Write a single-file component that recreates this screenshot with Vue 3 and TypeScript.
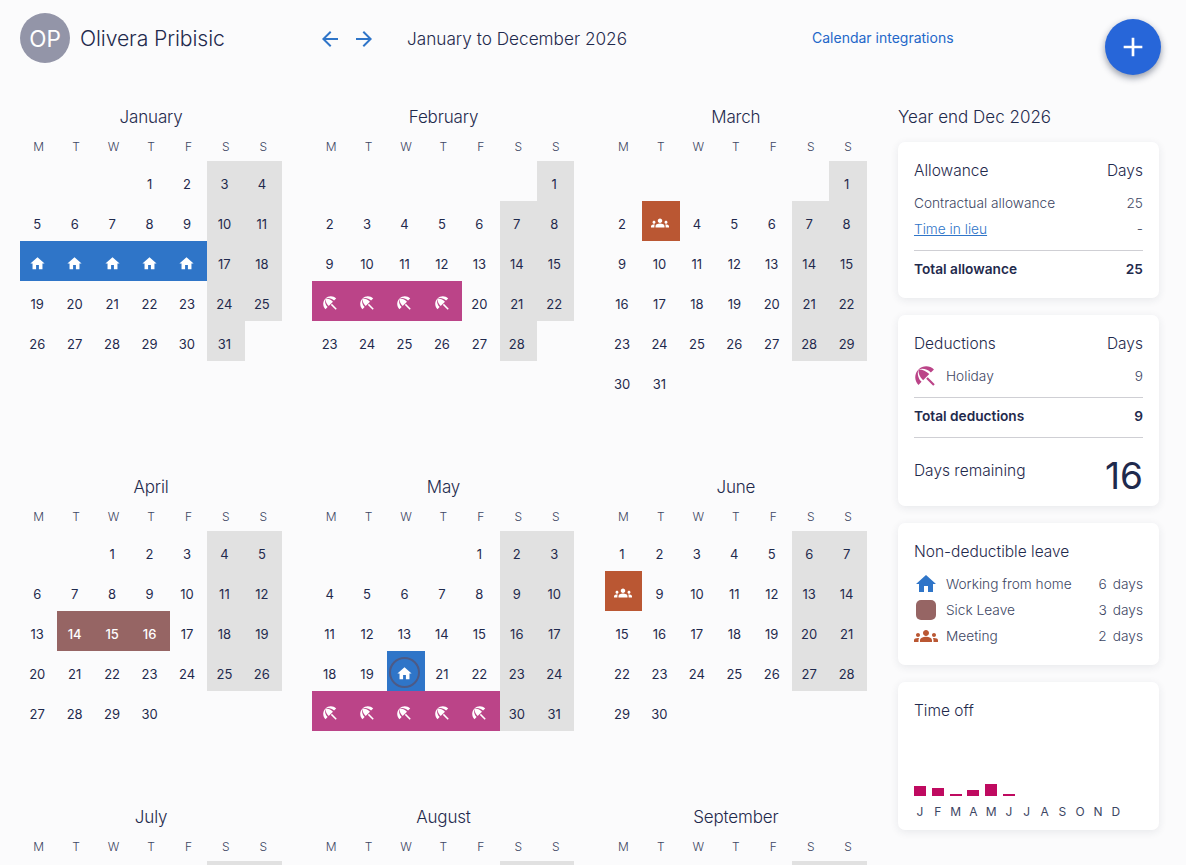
<script setup lang="ts">
type Kind = 'home' | 'holiday' | 'sick' | 'meeting'
interface Cell { day: number; weekend: boolean; kind?: Kind; today: boolean }

const ICONS: Record<string, string> = {
  home: 'M10 20v-6h4v6h5v-8h3L12 3 2 12h3v8z',
  holiday: 'M13.127 14.56l1.43-1.43 6.44 6.443L19.57 21zm4.293-5.73l2.86-2.86c-3.95-3.95-10.35-3.96-14.3-.02 3.93-1.3 8.31-.25 11.44 2.88zM5.95 5.98c-3.94 3.95-3.93 10.35.02 14.3l2.86-2.86C5.7 14.29 4.65 9.91 5.95 5.98zm.02-.02l-.01.01c-.38 3.01 1.17 6.88 4.3 10.02l5.73-5.73c-3.13-3.13-7.01-4.68-10.02-4.3z',
  meeting: 'M12 12.75c1.63 0 3.07.39 4.24.9 1.08.48 1.76 1.56 1.76 2.73V18H6v-1.61c0-1.18.68-2.26 1.76-2.73 1.17-.52 2.61-.91 4.24-.91zM4 13c1.1 0 2-.9 2-2s-.9-2-2-2-2 .9-2 2 .9 2 2 2zm1.13 1.1c-.37-.06-.74-.1-1.13-.1-.99 0-1.93.21-2.78.58C.48 14.9 0 15.62 0 16.43V18h4.5v-1.61c0-.83.23-1.61.63-2.29zM20 13c1.1 0 2-.9 2-2s-.9-2-2-2-2 .9-2 2 .9 2 2 2zm4 3.43c0-.81-.48-1.53-1.22-1.85-.85-.37-1.79-.58-2.78-.58-.39 0-.76.04-1.13.1.4.68.63 1.46.63 2.29V18H24v-1.57zM12 6c1.66 0 3 1.34 3 3s-1.34 3-3 3-3-1.34-3-3 1.34-3 3-3z',
  back: 'M20 11H7.83l5.59-5.59L12 4l-8 8 8 8 1.41-1.41L7.83 13H20v-2z',
  forward: 'M12 4l-1.41 1.41L16.17 11H4v2h12.17l-5.58 5.59L12 20l8-8z',
  plus: 'M19 13h-6v6h-2v-6H5v-2h6V5h2v6h6v2z',
}

const MONTH_NAMES = ['January', 'February', 'March', 'April', 'May', 'June', 'July', 'August', 'September', 'October', 'November', 'December']
const WEEKDAYS = ['M', 'T', 'W', 'T', 'F', 'S', 'S']

const EVENTS: Record<string, Kind> = {
  '0-12': 'home', '0-13': 'home', '0-14': 'home', '0-15': 'home', '0-16': 'home',
  '1-16': 'holiday', '1-17': 'holiday', '1-18': 'holiday', '1-19': 'holiday',
  '2-3': 'meeting',
  '3-14': 'sick', '3-15': 'sick', '3-16': 'sick',
  '4-20': 'home',
  '4-25': 'holiday', '4-26': 'holiday', '4-27': 'holiday', '4-28': 'holiday', '4-29': 'holiday',
  '5-8': 'meeting',
}

const months = MONTH_NAMES.map((name, m) => {
  const offset = (new Date(2026, m, 1).getDay() + 6) % 7
  const count = new Date(2026, m + 1, 0).getDate()
  const cells: Cell[] = []
  for (let day = 1; day <= count; day++) {
    const col = (offset + day - 1) % 7
    cells.push({ day, weekend: col >= 5, kind: EVENTS[`${m}-${day}`], today: m === 4 && day === 20 })
  }
  return { name, offset, cells }
})

const chart = [5, 4, 1, 3, 6, 1, 0, 0, 0, 0, 0, 0].map((days, i) => ({
  days,
  label: 'JFMAMJJASOND'[i],
}))
</script>

<template>
  <div class="page">
    <header class="top">
      <div class="person">
        <div class="avatar">OP</div>
        <div class="name">Olivera Pribisic</div>
      </div>
      <div class="arrows">
        <svg class="arrow" viewBox="0 0 24 24"><path :d="ICONS.back" /></svg>
        <svg class="arrow" viewBox="0 0 24 24"><path :d="ICONS.forward" /></svg>
      </div>
      <div class="range">January to December 2026</div>
      <a class="integrations">Calendar integrations</a>
    </header>

    <button class="fab" aria-label="Add">
      <svg viewBox="0 0 24 24"><path :d="ICONS.plus" /></svg>
    </button>

    <main class="body">
      <section class="year">
        <div v-for="month in months" :key="month.name" class="month">
          <h2 class="month-name">{{ month.name }}</h2>
          <div class="weekdays">
            <span v-for="(d, i) in WEEKDAYS" :key="i">{{ d }}</span>
          </div>
          <div class="days">
            <span v-for="n in month.offset" :key="'e' + n" class="blank"></span>
            <div
              v-for="cell in month.cells"
              :key="cell.day"
              class="cell"
              :class="[cell.kind, { weekend: cell.weekend }]"
            >
              <span v-if="cell.today" class="today"></span>
              <svg v-if="cell.kind === 'home'" class="ic-home" viewBox="0 0 24 24"><path :d="ICONS.home" /></svg>
              <svg v-else-if="cell.kind === 'holiday'" class="ic-holiday" viewBox="0 0 24 24"><path :d="ICONS.holiday" /></svg>
              <svg v-else-if="cell.kind === 'meeting'" class="ic-meeting" viewBox="0 0 24 24"><path :d="ICONS.meeting" /></svg>
              <span v-else>{{ cell.day }}</span>
            </div>
          </div>
        </div>
      </section>

      <aside class="side">
        <h2 class="side-title">Year end Dec 2026</h2>

        <div class="card">
          <div class="row head"><span>Allowance</span><span>Days</span></div>
          <div class="row line"><span>Contractual allowance</span><span>25</span></div>
          <div class="row line"><a class="lieu">Time in lieu</a><span>-</span></div>
          <div class="row total"><span>Total allowance</span><span>25</span></div>
        </div>

        <div class="card">
          <div class="row head"><span>Deductions</span><span>Days</span></div>
          <div class="row line">
            <span class="labelled">
              <span class="slot"><svg class="side-holiday" viewBox="0 0 24 24"><path :d="ICONS.holiday" /></svg></span>
              Holiday
            </span>
            <span>9</span>
          </div>
          <div class="row total"><span>Total deductions</span><span>9</span></div>
          <div class="row remaining"><span>Days remaining</span><span class="big">16</span></div>
        </div>

        <div class="card leave">
          <div class="row head"><span>Non-deductible leave</span></div>
          <div class="row line">
            <span class="labelled">
              <span class="slot"><svg class="side-home" viewBox="0 0 24 24"><path :d="ICONS.home" /></svg></span>
              Working from home
            </span>
            <span class="count"><span>6</span><span>days</span></span>
          </div>
          <div class="row line">
            <span class="labelled">
              <span class="slot"><span class="sick-swatch"></span></span>
              Sick Leave
            </span>
            <span class="count"><span>3</span><span>days</span></span>
          </div>
          <div class="row line">
            <span class="labelled">
              <span class="slot"><svg class="side-meeting" viewBox="0 0 24 24"><path :d="ICONS.meeting" /></svg></span>
              Meeting
            </span>
            <span class="count"><span>2</span><span>days</span></span>
          </div>
        </div>

        <div class="card off">
          <div class="row head"><span>Time off</span></div>
          <div class="bars">
            <div v-for="(c, i) in chart" :key="i" class="bar-col">
              <div class="bar" :style="{ height: c.days * 2 + 'px' }"></div>
            </div>
          </div>
          <div class="bar-labels">
            <span v-for="(c, i) in chart" :key="i">{{ c.label }}</span>
          </div>
        </div>
      </aside>
    </main>
  </div>
</template>

<style>
html, body {
  margin: 0;
  height: 100%;
  overflow: hidden;
  background: #fbfbfc;
}
</style>

<style scoped>
.page {
  position: relative;
  height: 865px;
  overflow: hidden;
  background: #fbfbfc;
  color: #1f2a4d;
  font-family: Inter, "Liberation Sans", sans-serif;
  font-weight: 300;
}
h2 { margin: 0; font-weight: 300; }

.top {
  display: flex;
  align-items: center;
  height: 50px;
  padding: 13px 0 41px 20px;
}
.person {
  display: flex;
  align-items: center;
  gap: 10px;
  width: 298px;
}
.avatar {
  width: 50px;
  height: 50px;
  border-radius: 50%;
  background: #9395a8;
  color: #fff;
  font-size: 22.5px;
  font-weight: 400;
  display: flex;
  align-items: center;
  justify-content: center;
}
.name {
  font-size: 21.2px;
  letter-spacing: -0.1px;
}
.arrows {
  display: flex;
  gap: 10px;
  width: 89px;
  padding-top: 2px;
}
.arrow {
  width: 24px;
  height: 24px;
  fill: #2f75c8;
}
.range {
  width: 405px;
  font-size: 17.2px;
}
.integrations {
  color: #2367c9;
  font-size: 14px;
  font-weight: 400;
  padding-bottom: 2px;
}

.fab {
  position: absolute;
  left: 1105px;
  top: 19px;
  width: 56px;
  height: 56px;
  padding: 0;
  border: 0;
  border-radius: 50%;
  background: #2766d9;
  box-shadow: 0 3px 7px rgba(20, 30, 60, 0.45);
  display: flex;
  align-items: center;
  justify-content: center;
}
.fab svg { width: 32px; height: 32px; fill: #fff; }

.body {
  display: flex;
  align-items: flex-start;
  padding-left: 20px;
  gap: 31.05px;
}
.year {
  display: grid;
  grid-template-columns: repeat(3, 262.15px);
  column-gap: 30.25px;
  row-gap: 73px;
}
.month-name {
  font-size: 17px;
  letter-spacing: -0.15px;
  line-height: 24px;
  text-align: center;
  padding-top: 1px;
  margin-bottom: 2px;
}
.weekdays {
  display: grid;
  grid-template-columns: repeat(7, 37.45px);
  height: 30px;
  align-items: center;
  text-align: center;
  font-size: 12px;
  color: #3d4663;
}
.days {
  display: grid;
  grid-template-columns: repeat(7, 37.45px);
  grid-auto-rows: 40px;
  font-size: 13px;
  font-weight: 400;
}
.cell {
  position: relative;
  display: flex;
  align-items: center;
  justify-content: center;
  padding: 5px 3px 0 0;
  box-sizing: border-box;
}
.weekend { background: #e1e1e1; }
.home { background: #2f75c8; }
.holiday { background: #bb4488; }
.sick { background: #966564; color: #fff; font-weight: 500; }
.meeting { background: #ba5733; }
.home, .holiday, .meeting { padding: 4px 3px 0 0; }

.ic-home { width: 17px; height: 17px; fill: #fff; }
.ic-holiday { width: 18px; height: 18px; fill: #fff; }
.ic-meeting { width: 18px; height: 18px; fill: #fff; }
.cell.meeting { padding: 4px 1px 0 0; }

.today {
  position: absolute;
  left: 2px;
  top: 6px;
  width: 27px;
  height: 27px;
  border: 2px solid #4d5a86;
  border-radius: 50%;
}

.side { width: 261px; }
.side-title {
  font-size: 17px;
  line-height: 24px;
  padding-top: 1px;
  margin-bottom: 13px;
}
.card {
  background: #fff;
  border-radius: 7px;
  box-shadow: 0 2px 8px rgba(30, 40, 70, 0.09);
  padding: 16px 16px 8px;
  margin-bottom: 17px;
}
.row {
  display: flex;
  justify-content: space-between;
  align-items: center;
}
.head {
  font-size: 15.5px;
  line-height: 24px;
  padding-top: 1px;
  margin-bottom: 7px;
}
.line {
  font-size: 13.7px;
  height: 26px;
  color: #3d4663;
}
.lieu {
  color: #2f75c8;
  text-decoration: underline;
}
.total {
  margin-top: 8px;
  border-top: 1px solid #cfcfd4;
  padding-top: 8px;
  padding-bottom: 11px;
  font-size: 13.7px;
  line-height: 20px;
  font-weight: 600;
}
.remaining {
  border-top: 1px solid #cfcfd4;
  font-size: 15.5px;
  height: 61px;
  padding-top: 7px;
  margin-bottom: -8px;
}
.remaining > span:first-child { padding-bottom: 10px; }
.big {
  font-size: 37px;
  font-weight: 400;
  line-height: 44px;
}
.labelled {
  display: flex;
  align-items: center;
}
.slot {
  width: 24px;
  margin-right: 8px;
  display: flex;
  align-items: center;
  justify-content: center;
}
.side-holiday { width: 26px; height: 26px; fill: #bb4488; margin: -1px 0 -1px -2px; }
.side-home { width: 24px; height: 24px; fill: #2f75c8; }
.side-meeting { width: 24px; height: 24px; fill: #ba5733; }
.sick-swatch {
  width: 20px;
  height: 20px;
  border-radius: 5px;
  background: #966564;
}
.count {
  display: flex;
  gap: 6px;
}
.leave { padding-bottom: 16px; }
.off { padding-bottom: 9px; }
.off .head { margin-bottom: 0; }
.bars {
  display: grid;
  grid-template-columns: repeat(12, 17.8px);
  height: 73px;
  align-items: end;
}
.bar-col { width: 12px; }
.bar { background: #bf0a60; width: 12px; }
.bar-labels {
  display: grid;
  grid-template-columns: repeat(12, 17.8px);
  margin-top: 7px;
  font-size: 12px;
  line-height: 18px;
  font-weight: 400;
  color: #3d4663;
}
.bar-labels span {
  width: 12px;
  text-align: center;
}
</style>
